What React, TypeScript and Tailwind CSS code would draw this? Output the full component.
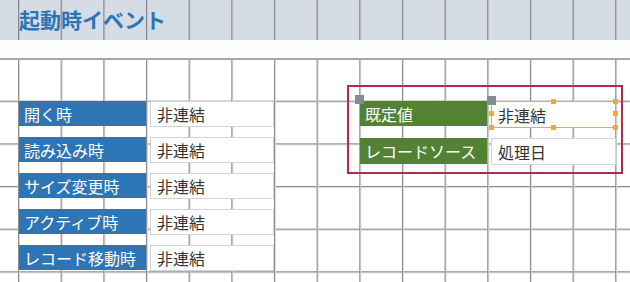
const font = { fontFamily: '"Noto Sans CJK JP", "Noto Sans", sans-serif' };

const leftRows = ["開く時", "読み込み時", "サイズ変更時", "アクティブ時", "レコード移動時"];

const Handle = ({ className }: { className: string }) => (
  <div className={`absolute w-[5px] h-[5px] bg-[#f7a534] ${className}`} />
);

const App = () => {
  return (
    <div className="w-[630px] h-[282px] overflow-hidden bg-white" style={font}>
      {/* form header section */}
      <div className="h-[40px] bg-[#d6dce5] bg-[linear-gradient(to_right,#80868f_1px,#c3c8d0_1px,#c3c8d0_2px,transparent_2px)] bg-[length:42.67px_100%] bg-[position:18px_0px] flex items-center pl-[19px]">
        <span className="text-[21px] font-bold text-[#2e75b6] leading-none -mt-[2px]">起動時イベント</span>
      </div>

      {/* section bar */}
      <div className="h-[20px] bg-[#fdfdfd] border-b-2 border-[#a8a8a8]" />

      {/* detail grid */}
      <div className="relative h-[222px] flex items-start bg-white bg-[linear-gradient(to_right,#8c8c8c_1px,#d8d8d8_1px,#d8d8d8_2px,transparent_2px),linear-gradient(to_bottom,#8c8c8c_1px,#d8d8d8_1px,#d8d8d8_2px,transparent_2px)] bg-[length:42.67px_42.67px] bg-[position:18px_40.67px]">
        <div className="mt-[41px] ml-[19px] flex flex-col gap-[10px]">
          {leftRows.map((t) => (
            <div key={t} className="flex items-start gap-[4px]">
              <div className="w-[127px] h-[25px] bg-[#2e75b6] text-white text-[16px] leading-none flex items-center pl-[5px]">
                {t}
              </div>
              <div className="w-[124px] h-[26px] bg-white border border-[#d4d4d4] text-[#333] text-[16px] leading-none flex items-center pl-[6px]">
                非連結
              </div>
            </div>
          ))}
        </div>

        {/* selected group */}
        <div className="relative mt-[25px] ml-[73px] w-[276px] h-[89px] border-2 border-[#b3294f] pl-[11px] pt-[14px] flex flex-col gap-[10px]">
          <div className="flex items-start gap-[4px]">
            <div className="relative w-[127px] h-[25px] bg-[#548235] text-white text-[16px] leading-none flex items-center pl-[5px]">
              既定値
              <div className="absolute -left-[5px] -top-[6px] w-[9px] h-[9px] bg-[#878b93]" />
            </div>
            <div className="relative w-[125px] h-[27px] bg-white border border-[#f7a534] text-[#333] text-[16px] leading-none flex items-center pl-[6px]">
              非連結
              <div className="absolute -left-[5px] -top-[6px] w-[9px] h-[9px] bg-[#878b93]" />
              <Handle className="-left-[3px] top-[9px]" />
              <Handle className="left-[59px] -top-[3px]" />
              <Handle className="-right-[3px] -top-[3px]" />
              <Handle className="-right-[3px] top-[9px]" />
              <Handle className="-left-[3px] -bottom-[3px]" />
              <Handle className="left-[59px] -bottom-[3px]" />
              <Handle className="-right-[3px] -bottom-[3px]" />
            </div>
          </div>
          <div className="flex items-start gap-[4px]">
            <div className="w-[127px] h-[26px] bg-[#548235] text-white text-[16px] leading-none flex items-center pl-[5px]">
              レコードソース
            </div>
            <div className="w-[125px] h-[27px] bg-white border border-[#d4d4d4] text-[#333] text-[16px] leading-none flex items-center pl-[6px]">
              処理日
            </div>
          </div>
        </div>
      </div>
    </div>
  );
};

export default App;
